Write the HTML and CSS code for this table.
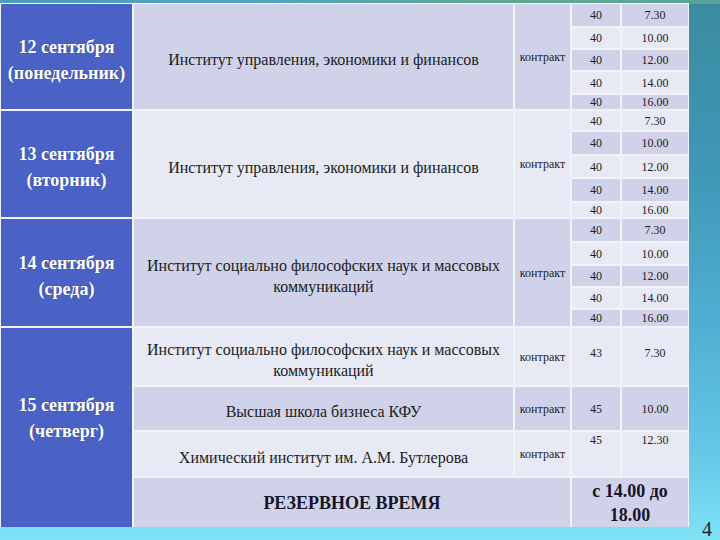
FILE: index.html
```html
<!DOCTYPE html>
<html lang="ru">
<head>
<meta charset="utf-8">
<title>Расписание</title>
<link rel="stylesheet" href="styles.css">
</head>
<body>
<main class="slide">
  <div class="schedule">
    <!-- 12 сентября -->
    <div class="cell date span5">12 сентября<br>(понедельник)</div>
    <div class="cell inst a span5">Институт управления, экономики и финансов</div>
    <div class="cell small a span5">контракт</div>
    <div class="cell small a">40</div><div class="cell small a">7.30</div>
    <div class="cell small b">40</div><div class="cell small b">10.00</div>
    <div class="cell small a">40</div><div class="cell small a">12.00</div>
    <div class="cell small b">40</div><div class="cell small b">14.00</div>
    <div class="cell small a">40</div><div class="cell small a">16.00</div>

    <!-- 13 сентября -->
    <div class="cell date span5">13 сентября<br>(вторник)</div>
    <div class="cell inst b span5">Институт управления, экономики и финансов</div>
    <div class="cell small b span5">контракт</div>
    <div class="cell small b">40</div><div class="cell small b">7.30</div>
    <div class="cell small a">40</div><div class="cell small a">10.00</div>
    <div class="cell small b">40</div><div class="cell small b">12.00</div>
    <div class="cell small a">40</div><div class="cell small a">14.00</div>
    <div class="cell small b">40</div><div class="cell small b">16.00</div>

    <!-- 14 сентября -->
    <div class="cell date span5">14 сентября<br>(среда)</div>
    <div class="cell inst a span5">Институт социально философских наук и массовых коммуникаций</div>
    <div class="cell small a span5">контракт</div>
    <div class="cell small a">40</div><div class="cell small a">7.30</div>
    <div class="cell small b">40</div><div class="cell small b">10.00</div>
    <div class="cell small a">40</div><div class="cell small a">12.00</div>
    <div class="cell small b">40</div><div class="cell small b">14.00</div>
    <div class="cell small a">40</div><div class="cell small a">16.00</div>

    <!-- 15 сентября -->
    <div class="cell date span4 date-last">15 сентября<br>(четверг)</div>
    <div class="cell inst b">Институт социально философских наук и массовых коммуникаций</div>
    <div class="cell small b">контракт</div>
    <div class="cell small b lift">43</div><div class="cell small b lift">7.30</div>

    <div class="cell inst a">Высшая школа бизнеса КФУ</div>
    <div class="cell small a">контракт</div>
    <div class="cell small a">45</div><div class="cell small a">10.00</div>

    <div class="cell inst b">Химический институт им. А.М. Бутлерова</div>
    <div class="cell small b">контракт</div>
    <div class="cell small b top">45</div><div class="cell small b top">12.30</div>

    <div class="cell reserve a colspan2">РЕЗЕРВНОЕ ВРЕМЯ</div>
    <div class="cell reserve-time a colspan2">с 14.00 до<br>18.00</div>
  </div>
  <span class="page-num">4</span>
</main>
</body>
</html>
```

FILE: styles.css
```css
* { box-sizing: border-box; }

html, body {
  margin: 0;
  padding: 0;
  width: 720px;
  height: 540px;
  overflow: hidden;
}

body {
  font-family: "Liberation Serif", "Tinos", "Times New Roman", "DejaVu Serif", serif;
  color: #1c1c1c;
  background:
    linear-gradient(90deg, #4d9cb8 0%, #56a6bc 40%, #62a68f 70%, #5aa29a 100%) top / 100% 4px no-repeat,
    linear-gradient(180deg, #3a8c9e 0%, #3f96b6 30%, #4fafd2 60%, #66c9e8 85%, #7fe3f7 100%);
}

.slide {
  position: relative;
  width: 720px;
  height: 540px;
  padding-top: 3px;
}

.schedule {
  display: grid;
  width: 689px;
  grid-template-columns: 131px 379px 55px 48px 66px;
  grid-template-rows:
    22px 20px 20px 21px 14px
    19px 22px 21px 22px 14px
    22px 21px 20px 20px 16px
    57px 43px 44px 49px;
  gap: 2px;
  padding: 1px 1px 0 1px;
  background: #f1f3f9;
}

.cell {
  display: flex;
  align-items: center;
  justify-content: center;
  text-align: center;
  overflow: visible;
  font-family: "Liberation Serif", "Tinos", "Times New Roman", "DejaVu Serif", serif;
}

.a { background: #d0d2ea; }
.b { background: #e7eaf5; }

.span5 { grid-row: span 5; }
.span4 { grid-row: span 4; }
.colspan2 { grid-column: span 2; }

.date {
  background: #4a62c5;
  color: #ffffff;
  font-weight: bold;
  font-size: 18px;
  line-height: 26px;
  padding-top: 6px;
  text-shadow: 0 0 1px rgba(20, 30, 80, 0.5);
}

.date-last {
  padding-top: 0;
  padding-bottom: 20px;
}

.inst {
  font-size: 16px;
  line-height: 21px;
  padding: 6px 10px 0;
}

.small {
  font-size: 12px;
  line-height: 14px;
}

.lift { padding-bottom: 8px; }

.top {
  align-items: flex-start;
  padding-top: 1px;
}

.reserve {
  font-size: 18px;
  font-weight: bold;
  color: #15152a;
  padding-top: 2px;
}

.reserve-time {
  font-size: 18px;
  font-weight: bold;
  line-height: 24px;
  color: #15152a;
}

.page-num {
  position: absolute;
  right: 8px;
  bottom: 1px;
  font-size: 20px;
  line-height: 20px;
  color: #222;
}
```
